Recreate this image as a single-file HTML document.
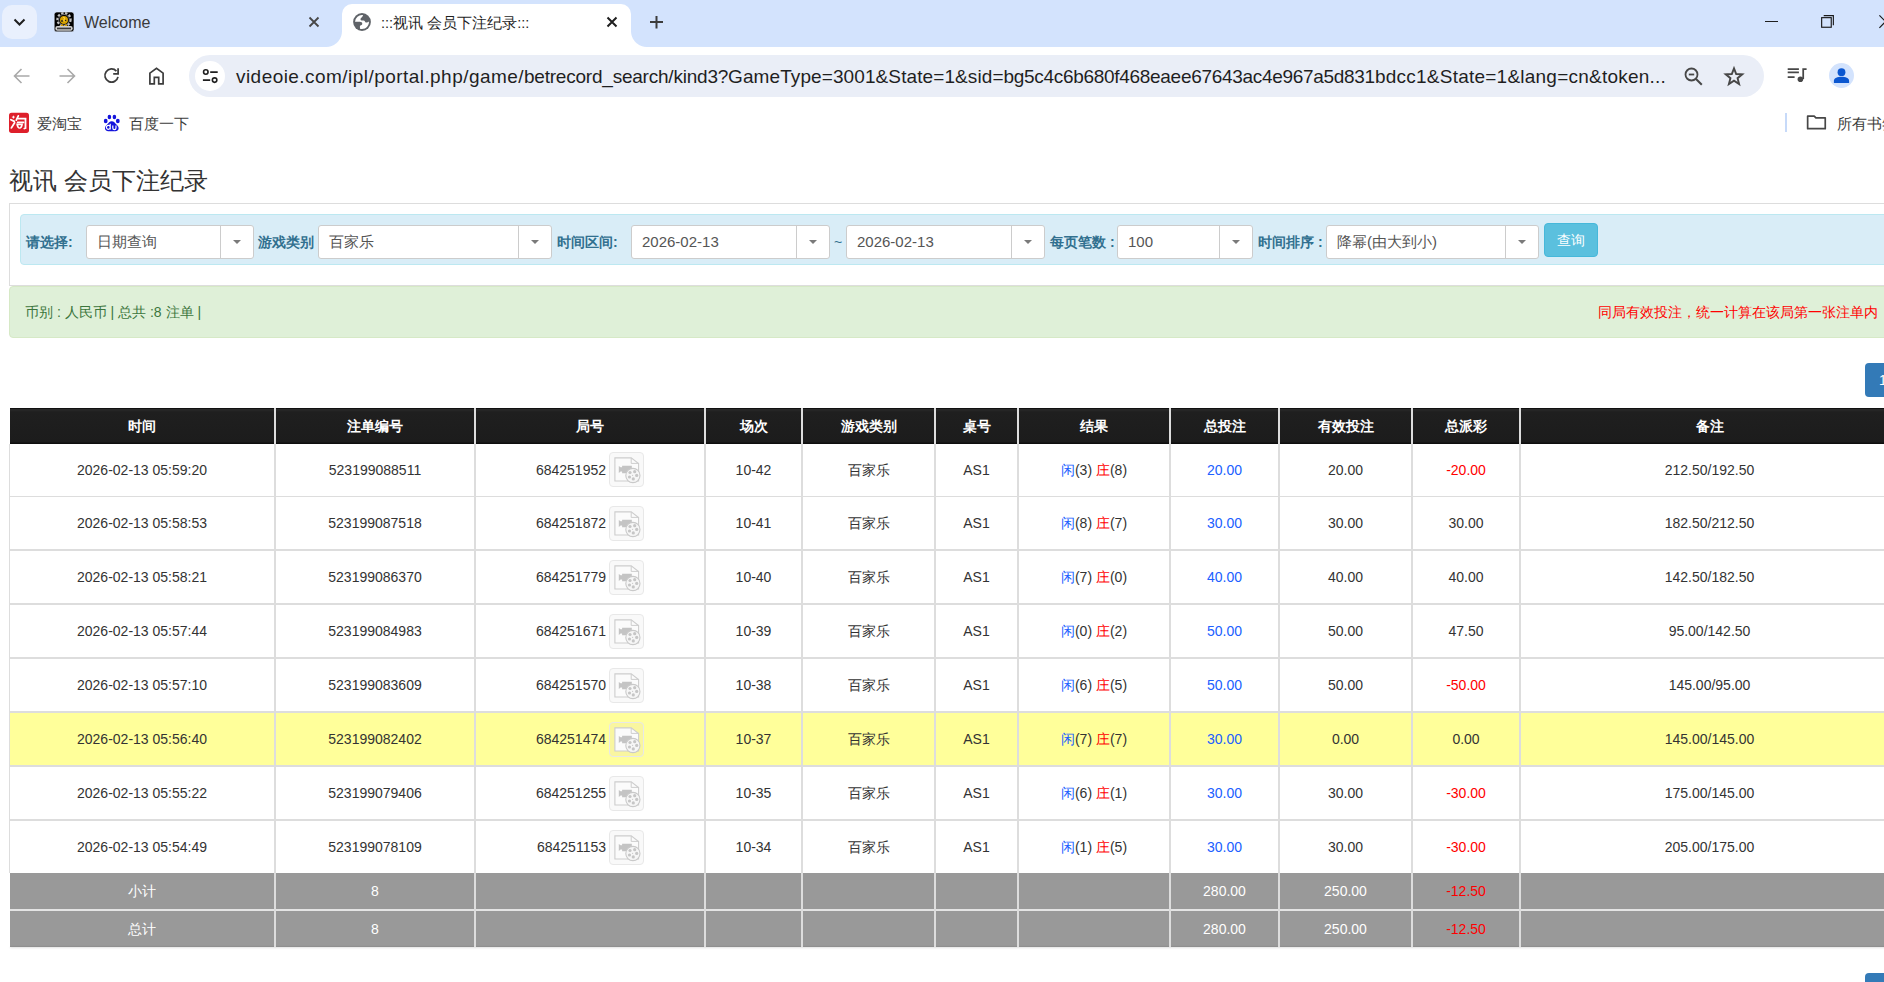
<!DOCTYPE html>
<html><head><meta charset="utf-8">
<style>
html,body{margin:0;padding:0;}
body{width:1884px;height:982px;overflow:hidden;position:relative;background:#fff;font-family:"Liberation Sans",sans-serif;color:#333;}
.a{position:absolute;}
.c{position:absolute;text-align:center;font-size:14px;color:#333;white-space:nowrap;padding-top:0px;box-sizing:border-box;}
.c.th{color:#fff;font-weight:bold;padding-top:0;}
.c.wt{color:#fff;padding-top:0;}
.blue{color:#2060ff;}
.red{color:#ff0000;}
.num{vertical-align:middle;}
.vbtn{display:inline-block;vertical-align:middle;width:33px;height:33px;border:1px solid #e8e8e8;border-radius:4px;margin-left:4px;position:relative;box-sizing:content-box;line-height:0;}
.vbtn svg{position:absolute;left:-1px;top:-1px;}
/* chrome */
#tabs{position:absolute;left:0;top:0;width:1884px;height:47px;background:#d3e3fd;}
.ui{font-family:"Liberation Sans",sans-serif;color:#1f1f1f;white-space:nowrap;}
.lbl{position:absolute;font-size:14px;font-weight:bold;color:#31708f;white-space:nowrap;line-height:33px;top:226px;}
.sel{position:absolute;top:225px;height:34px;box-sizing:border-box;border:1px solid #cccccc;border-radius:3px;background:#fff;}
.sel .t{position:absolute;left:10px;top:0;line-height:32px;font-size:15px;color:#555;white-space:nowrap;}
.sel .d{position:absolute;top:0;width:1px;height:32px;background:#cccccc;}
.sel .k{position:absolute;top:14px;width:0;height:0;border-left:4px solid transparent;border-right:4px solid transparent;border-top:4.5px solid #7a7a7a;}
</style></head><body>
<div id="tabs"></div>
<!-- tab search -->
<div class="a" style="left:2px;top:5px;width:35px;height:34px;border-radius:10px;background:#e9f0fd"></div>
<svg class="a" style="left:0;top:0" width="40" height="47"><path d="M14.5 19.5l5 5 5-5" fill="none" stroke="#1f1f1f" stroke-width="2"/></svg>
<!-- welcome favicon -->
<svg class="a" style="left:52px;top:10px" width="24" height="24" viewBox="0 0 24 24"><rect x="2.2" y="2" width="19.8" height="19.8" rx="2.6" fill="#000" stroke="#e4eeff" stroke-width="0.6"/><circle cx="12" cy="9.6" r="6.6" fill="none" stroke="#c2c2c2" stroke-width="2.2" stroke-dasharray="2.4 1.6"/><circle cx="12" cy="9.8" r="5.4" fill="none" stroke="#8a8a8a" stroke-width="0.8"/><circle cx="12" cy="10" r="4" fill="#d4a000"/><path d="M11 7.2c1.6.2 2.2 1.3 1.2 2.2-.8.7-.3 1.6.6 1.8" fill="none" stroke="#ffd23a" stroke-width="1.1"/><circle cx="10" cy="11" r="0.9" fill="#222"/><circle cx="13.6" cy="10.4" r="0.7" fill="#222"/><circle cx="10" cy="15.8" r="1.3" fill="#e0a400"/><circle cx="14" cy="15.8" r="1.3" fill="#e0a400"/><rect x="3.3" y="16" width="17.4" height="4.8" rx="2.2" fill="#d0d0d0"/><rect x="5" y="17.6" width="14" height="1.7" fill="#3a3a3a"/></svg>
<div class="a ui" style="left:84px;top:13px;font-size:16px;line-height:20px;color:#3a3a3a">Welcome</div>
<svg class="a" style="left:305px;top:13px" width="18" height="18"><path d="M4.5 4.5l9 9M13.5 4.5l-9 9" stroke="#474747" stroke-width="1.8"/></svg>
<!-- active tab -->
<div class="a" style="left:342px;top:4px;width:289px;height:43px;background:#fff;border-radius:10px 10px 0 0"></div>
<div class="a" style="left:326px;top:31px;width:16px;height:16px;background:radial-gradient(circle at 0 0, #d3e3fd 15.5px, #fff 16.5px)"></div>
<div class="a" style="left:631px;top:31px;width:16px;height:16px;background:radial-gradient(circle at 100% 0, #d3e3fd 15.5px, #fff 16.5px)"></div>
<svg class="a" style="left:350px;top:10px" width="24" height="24" viewBox="0 0 24 24"><circle cx="12" cy="12" r="8.9" fill="#5f6368"/><path fill="#fff" d="M13,5.07 C12.9,6.8 11.8,7.3 11,7.9 C10.2,8.6 10.3,10.2 11.5,10.4 L13.8,10.4 C14.6,10.5 14.8,11.2 15.2,11.9 C15.7,12.8 17.6,12.9 18.95,11.5 A7 7 0 0 1 10 18.7 L9.9,16.3 C10,15.4 10.8,15.3 11.6,15 C12.5,14.6 12.5,12.9 11.6,12.3 C10.4,11.5 6,11.6 5.0,11.8 A7 7 0 0 1 13 5.07Z"/></svg>
<div class="a ui" style="left:381px;top:13px;font-size:14.6px;line-height:20px;color:#1f1f1f">:::视讯 会员下注纪录:::</div>
<svg class="a" style="left:603px;top:13px" width="18" height="18"><path d="M4.5 4.5l9 9M13.5 4.5l-9 9" stroke="#1f1f1f" stroke-width="2"/></svg>
<svg class="a" style="left:647px;top:13px" width="20" height="18"><path d="M3 9h13M9.5 3v12.5" stroke="#3c3c3c" stroke-width="2"/></svg>
<!-- window controls -->
<div class="a" style="left:1765px;top:21px;width:13px;height:1px;background:#1f1f1f"></div>
<svg class="a" style="left:1818px;top:12px" width="20" height="20"><rect x="3.65" y="5.65" width="9.6" height="9.6" fill="none" stroke="#1a1a1a" stroke-width="1.15"/><path d="M5.7 3.55H15.35V13.2" fill="none" stroke="#1a1a1a" stroke-width="1.15"/></svg>
<svg class="a" style="left:1872px;top:12px" width="20" height="20"><path d="M7.4 3.4l12.4 12.4M19.8 3.4L7.4 15.8" stroke="#1a1a1a" stroke-width="1.2"/></svg>

<!-- toolbar -->
<svg class="a" style="left:10px;top:64px" width="24" height="24" viewBox="0 0 24 24"><path d="M19.5 12H5M11.5 5L4.5 12l7 7" fill="none" stroke="#a9a9a9" stroke-width="1.6"/></svg>
<svg class="a" style="left:55px;top:64px" width="24" height="24" viewBox="0 0 24 24"><path d="M4.5 12H19M12.5 5l7 7-7 7" fill="none" stroke="#a9a9a9" stroke-width="1.6"/></svg>
<svg class="a" style="left:100px;top:64px" width="24" height="24" viewBox="0 0 24 24"><path d="M16.4 7.1A6.6 6.6 0 1 0 18.0 12.8" fill="none" stroke="#3c3c3c" stroke-width="1.75"/><path d="M13.2 9.9H18.1V4.2" fill="none" stroke="#3c3c3c" stroke-width="1.75"/></svg>
<svg class="a" style="left:145px;top:64px" width="24" height="24" viewBox="0 0 24 24"><path d="M4.9 19.9V9.1L11.5 4.3 18.1 9.1V19.9H13.7V13.3H9.3V19.9Z" fill="none" stroke="#3c3c3c" stroke-width="1.7"/></svg>
<div class="a" style="left:189px;top:55px;width:1575px;height:42px;border-radius:21px;background:#eaeef7"></div>
<div class="a" style="left:195px;top:61px;width:30px;height:30px;border-radius:50%;background:#fff"></div>
<svg class="a" style="left:198px;top:64px" width="24" height="24" viewBox="0 0 24 24"><circle cx="7.8" cy="8" r="2.25" fill="none" stroke="#1f1f1f" stroke-width="1.6"/><path d="M12.2 8H19.7M4.9 16.1H12.2" stroke="#1f1f1f" stroke-width="1.75"/><circle cx="16.6" cy="16.1" r="2.25" fill="none" stroke="#1f1f1f" stroke-width="1.6"/></svg>
<div class="a ui" style="left:236px;top:65px;font-size:19px;line-height:24px;color:#1f1f1f;letter-spacing:0.45px">videoie.com/ipl/portal.php/game/</div><div class="a ui" style="left:524px;top:65px;font-size:19px;line-height:24px;color:#1f1f1f;letter-spacing:-0.22px">betrecord_search/kind3?</div><div class="a ui" style="left:728px;top:65px;font-size:19px;line-height:24px;color:#1f1f1f;letter-spacing:0.1px">GameType=3001&amp;State=1&amp;sid=</div><div class="a ui" style="left:1003.5px;top:65px;font-size:19px;line-height:24px;color:#1f1f1f;letter-spacing:-0.3px">bg5c4c6b680f468eaee67643ac4e967a5d831</div><div class="a ui" style="left:1375px;top:65px;font-size:19px;line-height:24px;color:#1f1f1f;letter-spacing:0.23px">bdcc1&amp;State=1&amp;lang=cn&amp;token...</div>
<svg class="a" style="left:1682px;top:65px" width="24" height="24" viewBox="0 0 24 24"><circle cx="9.5" cy="9.5" r="6" fill="none" stroke="#474747" stroke-width="1.8"/><path d="M6.8 9.5h5.4" stroke="#474747" stroke-width="1.8"/><path d="M13.8 13.8l6 6" stroke="#474747" stroke-width="2"/></svg>
<svg class="a" style="left:1722px;top:64px" width="24" height="24" viewBox="0 0 24 24"><path d="M12.00 4.30 L14.20 9.97 L20.27 10.31 L15.56 14.16 L17.11 20.04 L12.00 16.74 L6.89 20.04 L8.44 14.16 L3.73 10.31 L9.80 9.97Z" fill="none" stroke="#474747" stroke-width="1.9" stroke-linejoin="miter" stroke-miterlimit="3"/></svg>
<svg class="a" style="left:1785px;top:63px" width="24" height="24" viewBox="0 0 24 24"><path d="M2.7 6.1H13.9M2.7 9.4H13.9M2.7 14H9.6" stroke="#474747" stroke-width="1.75"/><path d="M18.2 16V6.1H21.6" fill="none" stroke="#474747" stroke-width="1.75"/><circle cx="15.4" cy="16.2" r="2.8" fill="#474747"/></svg>
<div class="a" style="left:1829px;top:63px;width:25px;height:25px;border-radius:50%;background:#d3e3fd"></div>
<svg class="a" style="left:1829px;top:63px" width="25" height="25" viewBox="0 0 25 25"><circle cx="12.5" cy="9.2" r="3.9" fill="#0b57d0"/><path d="M4.9 20V17.9C4.9 15.1 8.6 13.8 12.5 13.8S20.1 15.1 20.1 17.9V20Z" fill="#0b57d0"/></svg>

<!-- bookmarks bar -->
<svg class="a" style="left:6px;top:110px" width="26" height="26" viewBox="0 0 26 26"><rect x="3" y="2.8" width="20" height="20.1" rx="2.6" fill="#de1f2b"/><g fill="none" stroke="#fff" stroke-width="1.8" stroke-linecap="round"><path d="M4.9 9.7L8.3 11.4"/><path d="M5.4 17.9L8.6 12.7"/><path d="M12.3 5.9L10.3 10.1"/><path d="M12.3 8.6H19.5V18.1L18.3 18.5"/><path d="M11.7 12.4H17.5"/></g><path d="M7.4 5.2L7.95 6.55 9.3 7.1 7.95 7.65 7.4 9 6.85 7.65 5.5 7.1 6.85 6.55Z" fill="#fff"/><path d="M10.2 13.6H17C16.9 17.2 15.2 18.8 13.6 18.8 12 18.8 10.3 17.2 10.2 13.6Z" fill="#fff"/><path d="M13.6 17.4C12.3 16.4 12.1 15.3 12.9 15 13.3 14.85 13.6 15.1 13.6 15.4 13.6 15.1 13.9 14.85 14.3 15 15.1 15.3 14.9 16.4 13.6 17.4Z" fill="#de1f2b"/></svg>
<div class="a ui" style="left:37px;top:114px;font-size:14.5px;line-height:20px;color:#3c3c3c">爱淘宝</div>
<svg class="a" style="left:100px;top:110px" width="24" height="26" viewBox="0 0 24 26"><g fill="#1414dc"><ellipse cx="5.7" cy="11" rx="1.9" ry="2.2"/><ellipse cx="9.4" cy="7" rx="1.8" ry="2.3"/><ellipse cx="14.4" cy="7" rx="1.8" ry="2.3"/><ellipse cx="17.8" cy="11" rx="1.9" ry="2.2"/><path d="M11.7 11.2c-2 0-3.2 1.8-4.6 3.3-1.3 1.4-2.4 2.5-2.1 4.3.3 1.6 1.6 2.4 3.2 2.4h7.2c1.6 0 3-.8 3.2-2.4.3-1.8-.8-2.9-2.1-4.3-1.4-1.5-2.6-3.3-4.8-3.3Z"/></g><path d="M10.2 13.8v5.6M10.2 17.3a1.9 2 0 1 0 0 .1M12.8 15.6v2.4a1.6 1.6 0 0 0 3.2 0v-2.4" fill="none" stroke="#fff" stroke-width="1.2"/></svg>
<div class="a ui" style="left:129px;top:114px;font-size:14.5px;line-height:20px;color:#3c3c3c">百度一下</div>
<div class="a" style="left:1785px;top:113px;width:2px;height:19px;background:#c7daf9"></div>
<svg class="a" style="left:1804px;top:111px" width="24" height="24" viewBox="0 0 24 24"><path d="M3.65 5.05H10.2L11.9 6.8H21.25V17.65H3.65Z" fill="none" stroke="#474747" stroke-width="1.7" stroke-linejoin="round"/></svg>
<div class="a ui" style="left:1837px;top:114px;font-size:14.5px;line-height:20px;color:#3c3c3c">所有书签</div>

<!-- page -->
<div class="a" style="left:9px;top:165px;font-size:24px;line-height:32px;color:#333;white-space:nowrap">视讯 会员下注纪录</div>
<div class="a" style="left:9px;top:203px;width:2000px;height:83px;border:1px solid #dddddd;box-sizing:border-box"></div>
<div class="a" style="left:20px;top:214px;width:2000px;height:51px;border:1px solid #bce8f1;border-radius:4px;background:#d9edf7;box-sizing:border-box"></div>
<div class="lbl" style="left:26px">请选择:</div>
<div class="sel" style="left:86px;width:168px"><span class="t">日期查询</span><span class="d" style="left:133px"></span><span class="k" style="left:146.0px"></span></div>
<div class="lbl" style="left:258px">游戏类别</div>
<div class="sel" style="left:318px;width:234px"><span class="t">百家乐</span><span class="d" style="left:199px"></span><span class="k" style="left:212.0px"></span></div>
<div class="lbl" style="left:557px">时间区间:</div>
<div class="sel" style="left:631px;width:199px"><span class="t">2026-02-13</span><span class="d" style="left:164px"></span><span class="k" style="left:177.0px"></span></div>
<div class="lbl" style="left:834px;font-weight:normal">~</div>
<div class="sel" style="left:846px;width:199px"><span class="t">2026-02-13</span><span class="d" style="left:164px"></span><span class="k" style="left:177.0px"></span></div>
<div class="lbl" style="left:1050px">每页笔数 :</div>
<div class="sel" style="left:1117px;width:136px"><span class="t">100</span><span class="d" style="left:101px"></span><span class="k" style="left:114.0px"></span></div>
<div class="lbl" style="left:1258px">时间排序 :</div>
<div class="sel" style="left:1326px;width:213px"><span class="t">降幂(由大到小)</span><span class="d" style="left:178px"></span><span class="k" style="left:191.0px"></span></div>
<div class="a" style="left:1544px;top:223px;width:54px;height:34px;box-sizing:border-box;border:1px solid #46b8da;border-radius:4px;background:#5bc0de;color:#fff;font-size:14px;line-height:32px;text-align:center">查询</div>

<div class="a" style="left:9px;top:286px;width:2000px;height:52px;border:1px solid #d6e9c6;border-radius:4px;background:#dff0d8;box-sizing:border-box"></div>
<div class="a" style="left:25px;top:302px;font-size:14px;line-height:20px;color:#3c763d;white-space:nowrap">币别 : 人民币 | 总共 :8 注单 |</div>
<div class="a" style="left:1598px;top:302px;font-size:14px;line-height:20px;color:#ff0000;white-space:nowrap">同局有效投注，统一计算在该局第一张注单内</div>

<div class="a" style="left:1865px;top:363px;width:60px;height:34px;border-radius:4px;background:#337ab7;color:#fff;font-size:14px;line-height:34px;text-indent:14px">1</div>

<div style="position:absolute;left:10px;top:408px;width:1900px;height:36px;background:linear-gradient(#111 0px,#111 1px,#2b2b2b 1px,#1f1f1f 4px,#1c1c1c 34px,#0e0e0e 35px,#0e0e0e 36px)"></div>
<div class="c th" style="left:10px;top:408px;width:264px;height:36px;line-height:36px">时间</div>
<div class="c th" style="left:276px;top:408px;width:198px;height:36px;line-height:36px">注单编号</div>
<div class="c th" style="left:476px;top:408px;width:228px;height:36px;line-height:36px">局号</div>
<div class="c th" style="left:706px;top:408px;width:95px;height:36px;line-height:36px">场次</div>
<div class="c th" style="left:803px;top:408px;width:131px;height:36px;line-height:36px">游戏类别</div>
<div class="c th" style="left:936px;top:408px;width:81px;height:36px;line-height:36px">桌号</div>
<div class="c th" style="left:1019px;top:408px;width:150px;height:36px;line-height:36px">结果</div>
<div class="c th" style="left:1171px;top:408px;width:107px;height:36px;line-height:36px">总投注</div>
<div class="c th" style="left:1280px;top:408px;width:131px;height:36px;line-height:36px">有效投注</div>
<div class="c th" style="left:1413px;top:408px;width:106px;height:36px;line-height:36px">总派彩</div>
<div class="c th" style="left:1521px;top:408px;width:377px;height:36px;line-height:36px">备注</div>
<div style="position:absolute;left:10px;top:444px;width:1900px;height:52px;background:#fff"></div>
<div class="c " style="left:10px;top:444px;width:264px;height:52px;line-height:52px">2026-02-13 05:59:20</div>
<div class="c " style="left:276px;top:444px;width:198px;height:52px;line-height:52px">523199088511</div>
<div class="c" style="left:476px;top:444px;width:130px;height:52px;line-height:52px;text-align:right">684251952</div>
<div class="vbtn" style="position:absolute;left:609px;top:452px;background:#f9f9f9;margin:0"><svg width="35" height="35" viewBox="0 0 35 35"><path d="M5.9 5.9H22.2L29.6 11.6V29H5.9Z" fill="#fbfbfb" stroke="#cdcdcd" stroke-width="1.1"/><path d="M22.2 5.9V11.4H29.6" fill="none" stroke="#cdcdcd" stroke-width="1"/><path d="M13.1 13.7H22.8V21.2H13.1V19.6H11.6L9.8 20.9V13.9L11.6 15.3H13.1Z" fill="#c4c4c4"/><circle cx="23.9" cy="23.5" r="7.1" fill="#f6f6f6" stroke="#c9c9c9" stroke-width="1.1"/><g fill="#c6c6c6"><circle cx="21" cy="20.5" r="1.6"/><circle cx="25.7" cy="19.7" r="1.6"/><circle cx="27.7" cy="23.4" r="1.6"/><circle cx="24.3" cy="26.9" r="1.6"/><circle cx="20.5" cy="25" r="1.6"/><circle cx="23.6" cy="23.3" r="0.6"/></g></svg></div>
<div class="c " style="left:706px;top:444px;width:95px;height:52px;line-height:52px">10-42</div>
<div class="c " style="left:803px;top:444px;width:131px;height:52px;line-height:52px">百家乐</div>
<div class="c " style="left:936px;top:444px;width:81px;height:52px;line-height:52px">AS1</div>
<div class="c " style="left:1019px;top:444px;width:150px;height:52px;line-height:52px"><span class="blue">闲</span>(3) <span class="red">庄</span>(8)</div>
<div class="c " style="left:1171px;top:444px;width:107px;height:52px;line-height:52px"><span class="blue">20.00</span></div>
<div class="c " style="left:1280px;top:444px;width:131px;height:52px;line-height:52px">20.00</div>
<div class="c " style="left:1413px;top:444px;width:106px;height:52px;line-height:52px"><span class="red">-20.00</span></div>
<div class="c " style="left:1521px;top:444px;width:377px;height:52px;line-height:52px">212.50/192.50</div>
<div style="position:absolute;left:10px;top:497px;width:1900px;height:52px;background:#fff"></div>
<div class="c " style="left:10px;top:497px;width:264px;height:52px;line-height:52px">2026-02-13 05:58:53</div>
<div class="c " style="left:276px;top:497px;width:198px;height:52px;line-height:52px">523199087518</div>
<div class="c" style="left:476px;top:497px;width:130px;height:52px;line-height:52px;text-align:right">684251872</div>
<div class="vbtn" style="position:absolute;left:609px;top:506px;background:#f9f9f9;margin:0"><svg width="35" height="35" viewBox="0 0 35 35"><path d="M5.9 5.9H22.2L29.6 11.6V29H5.9Z" fill="#fbfbfb" stroke="#cdcdcd" stroke-width="1.1"/><path d="M22.2 5.9V11.4H29.6" fill="none" stroke="#cdcdcd" stroke-width="1"/><path d="M13.1 13.7H22.8V21.2H13.1V19.6H11.6L9.8 20.9V13.9L11.6 15.3H13.1Z" fill="#c4c4c4"/><circle cx="23.9" cy="23.5" r="7.1" fill="#f6f6f6" stroke="#c9c9c9" stroke-width="1.1"/><g fill="#c6c6c6"><circle cx="21" cy="20.5" r="1.6"/><circle cx="25.7" cy="19.7" r="1.6"/><circle cx="27.7" cy="23.4" r="1.6"/><circle cx="24.3" cy="26.9" r="1.6"/><circle cx="20.5" cy="25" r="1.6"/><circle cx="23.6" cy="23.3" r="0.6"/></g></svg></div>
<div class="c " style="left:706px;top:497px;width:95px;height:52px;line-height:52px">10-41</div>
<div class="c " style="left:803px;top:497px;width:131px;height:52px;line-height:52px">百家乐</div>
<div class="c " style="left:936px;top:497px;width:81px;height:52px;line-height:52px">AS1</div>
<div class="c " style="left:1019px;top:497px;width:150px;height:52px;line-height:52px"><span class="blue">闲</span>(8) <span class="red">庄</span>(7)</div>
<div class="c " style="left:1171px;top:497px;width:107px;height:52px;line-height:52px"><span class="blue">30.00</span></div>
<div class="c " style="left:1280px;top:497px;width:131px;height:52px;line-height:52px">30.00</div>
<div class="c " style="left:1413px;top:497px;width:106px;height:52px;line-height:52px">30.00</div>
<div class="c " style="left:1521px;top:497px;width:377px;height:52px;line-height:52px">182.50/212.50</div>
<div style="position:absolute;left:10px;top:551px;width:1900px;height:52px;background:#fff"></div>
<div class="c " style="left:10px;top:551px;width:264px;height:52px;line-height:52px">2026-02-13 05:58:21</div>
<div class="c " style="left:276px;top:551px;width:198px;height:52px;line-height:52px">523199086370</div>
<div class="c" style="left:476px;top:551px;width:130px;height:52px;line-height:52px;text-align:right">684251779</div>
<div class="vbtn" style="position:absolute;left:609px;top:560px;background:#f9f9f9;margin:0"><svg width="35" height="35" viewBox="0 0 35 35"><path d="M5.9 5.9H22.2L29.6 11.6V29H5.9Z" fill="#fbfbfb" stroke="#cdcdcd" stroke-width="1.1"/><path d="M22.2 5.9V11.4H29.6" fill="none" stroke="#cdcdcd" stroke-width="1"/><path d="M13.1 13.7H22.8V21.2H13.1V19.6H11.6L9.8 20.9V13.9L11.6 15.3H13.1Z" fill="#c4c4c4"/><circle cx="23.9" cy="23.5" r="7.1" fill="#f6f6f6" stroke="#c9c9c9" stroke-width="1.1"/><g fill="#c6c6c6"><circle cx="21" cy="20.5" r="1.6"/><circle cx="25.7" cy="19.7" r="1.6"/><circle cx="27.7" cy="23.4" r="1.6"/><circle cx="24.3" cy="26.9" r="1.6"/><circle cx="20.5" cy="25" r="1.6"/><circle cx="23.6" cy="23.3" r="0.6"/></g></svg></div>
<div class="c " style="left:706px;top:551px;width:95px;height:52px;line-height:52px">10-40</div>
<div class="c " style="left:803px;top:551px;width:131px;height:52px;line-height:52px">百家乐</div>
<div class="c " style="left:936px;top:551px;width:81px;height:52px;line-height:52px">AS1</div>
<div class="c " style="left:1019px;top:551px;width:150px;height:52px;line-height:52px"><span class="blue">闲</span>(7) <span class="red">庄</span>(0)</div>
<div class="c " style="left:1171px;top:551px;width:107px;height:52px;line-height:52px"><span class="blue">40.00</span></div>
<div class="c " style="left:1280px;top:551px;width:131px;height:52px;line-height:52px">40.00</div>
<div class="c " style="left:1413px;top:551px;width:106px;height:52px;line-height:52px">40.00</div>
<div class="c " style="left:1521px;top:551px;width:377px;height:52px;line-height:52px">142.50/182.50</div>
<div style="position:absolute;left:10px;top:605px;width:1900px;height:52px;background:#fff"></div>
<div class="c " style="left:10px;top:605px;width:264px;height:52px;line-height:52px">2026-02-13 05:57:44</div>
<div class="c " style="left:276px;top:605px;width:198px;height:52px;line-height:52px">523199084983</div>
<div class="c" style="left:476px;top:605px;width:130px;height:52px;line-height:52px;text-align:right">684251671</div>
<div class="vbtn" style="position:absolute;left:609px;top:614px;background:#f9f9f9;margin:0"><svg width="35" height="35" viewBox="0 0 35 35"><path d="M5.9 5.9H22.2L29.6 11.6V29H5.9Z" fill="#fbfbfb" stroke="#cdcdcd" stroke-width="1.1"/><path d="M22.2 5.9V11.4H29.6" fill="none" stroke="#cdcdcd" stroke-width="1"/><path d="M13.1 13.7H22.8V21.2H13.1V19.6H11.6L9.8 20.9V13.9L11.6 15.3H13.1Z" fill="#c4c4c4"/><circle cx="23.9" cy="23.5" r="7.1" fill="#f6f6f6" stroke="#c9c9c9" stroke-width="1.1"/><g fill="#c6c6c6"><circle cx="21" cy="20.5" r="1.6"/><circle cx="25.7" cy="19.7" r="1.6"/><circle cx="27.7" cy="23.4" r="1.6"/><circle cx="24.3" cy="26.9" r="1.6"/><circle cx="20.5" cy="25" r="1.6"/><circle cx="23.6" cy="23.3" r="0.6"/></g></svg></div>
<div class="c " style="left:706px;top:605px;width:95px;height:52px;line-height:52px">10-39</div>
<div class="c " style="left:803px;top:605px;width:131px;height:52px;line-height:52px">百家乐</div>
<div class="c " style="left:936px;top:605px;width:81px;height:52px;line-height:52px">AS1</div>
<div class="c " style="left:1019px;top:605px;width:150px;height:52px;line-height:52px"><span class="blue">闲</span>(0) <span class="red">庄</span>(2)</div>
<div class="c " style="left:1171px;top:605px;width:107px;height:52px;line-height:52px"><span class="blue">50.00</span></div>
<div class="c " style="left:1280px;top:605px;width:131px;height:52px;line-height:52px">50.00</div>
<div class="c " style="left:1413px;top:605px;width:106px;height:52px;line-height:52px">47.50</div>
<div class="c " style="left:1521px;top:605px;width:377px;height:52px;line-height:52px">95.00/142.50</div>
<div style="position:absolute;left:10px;top:659px;width:1900px;height:52px;background:#fff"></div>
<div class="c " style="left:10px;top:659px;width:264px;height:52px;line-height:52px">2026-02-13 05:57:10</div>
<div class="c " style="left:276px;top:659px;width:198px;height:52px;line-height:52px">523199083609</div>
<div class="c" style="left:476px;top:659px;width:130px;height:52px;line-height:52px;text-align:right">684251570</div>
<div class="vbtn" style="position:absolute;left:609px;top:668px;background:#f9f9f9;margin:0"><svg width="35" height="35" viewBox="0 0 35 35"><path d="M5.9 5.9H22.2L29.6 11.6V29H5.9Z" fill="#fbfbfb" stroke="#cdcdcd" stroke-width="1.1"/><path d="M22.2 5.9V11.4H29.6" fill="none" stroke="#cdcdcd" stroke-width="1"/><path d="M13.1 13.7H22.8V21.2H13.1V19.6H11.6L9.8 20.9V13.9L11.6 15.3H13.1Z" fill="#c4c4c4"/><circle cx="23.9" cy="23.5" r="7.1" fill="#f6f6f6" stroke="#c9c9c9" stroke-width="1.1"/><g fill="#c6c6c6"><circle cx="21" cy="20.5" r="1.6"/><circle cx="25.7" cy="19.7" r="1.6"/><circle cx="27.7" cy="23.4" r="1.6"/><circle cx="24.3" cy="26.9" r="1.6"/><circle cx="20.5" cy="25" r="1.6"/><circle cx="23.6" cy="23.3" r="0.6"/></g></svg></div>
<div class="c " style="left:706px;top:659px;width:95px;height:52px;line-height:52px">10-38</div>
<div class="c " style="left:803px;top:659px;width:131px;height:52px;line-height:52px">百家乐</div>
<div class="c " style="left:936px;top:659px;width:81px;height:52px;line-height:52px">AS1</div>
<div class="c " style="left:1019px;top:659px;width:150px;height:52px;line-height:52px"><span class="blue">闲</span>(6) <span class="red">庄</span>(5)</div>
<div class="c " style="left:1171px;top:659px;width:107px;height:52px;line-height:52px"><span class="blue">50.00</span></div>
<div class="c " style="left:1280px;top:659px;width:131px;height:52px;line-height:52px">50.00</div>
<div class="c " style="left:1413px;top:659px;width:106px;height:52px;line-height:52px"><span class="red">-50.00</span></div>
<div class="c " style="left:1521px;top:659px;width:377px;height:52px;line-height:52px">145.00/95.00</div>
<div style="position:absolute;left:10px;top:713px;width:1900px;height:52px;background:#ffff9a"></div>
<div class="c " style="left:10px;top:713px;width:264px;height:52px;line-height:52px">2026-02-13 05:56:40</div>
<div class="c " style="left:276px;top:713px;width:198px;height:52px;line-height:52px">523199082402</div>
<div class="c" style="left:476px;top:713px;width:130px;height:52px;line-height:52px;text-align:right">684251474</div>
<div class="vbtn" style="position:absolute;left:609px;top:722px;background:#f9f6a0;margin:0"><svg width="35" height="35" viewBox="0 0 35 35"><path d="M5.9 5.9H22.2L29.6 11.6V29H5.9Z" fill="#fbfbfb" stroke="#cdcdcd" stroke-width="1.1"/><path d="M22.2 5.9V11.4H29.6" fill="none" stroke="#cdcdcd" stroke-width="1"/><path d="M13.1 13.7H22.8V21.2H13.1V19.6H11.6L9.8 20.9V13.9L11.6 15.3H13.1Z" fill="#c4c4c4"/><circle cx="23.9" cy="23.5" r="7.1" fill="#f6f6f6" stroke="#c9c9c9" stroke-width="1.1"/><g fill="#c6c6c6"><circle cx="21" cy="20.5" r="1.6"/><circle cx="25.7" cy="19.7" r="1.6"/><circle cx="27.7" cy="23.4" r="1.6"/><circle cx="24.3" cy="26.9" r="1.6"/><circle cx="20.5" cy="25" r="1.6"/><circle cx="23.6" cy="23.3" r="0.6"/></g></svg></div>
<div class="c " style="left:706px;top:713px;width:95px;height:52px;line-height:52px">10-37</div>
<div class="c " style="left:803px;top:713px;width:131px;height:52px;line-height:52px">百家乐</div>
<div class="c " style="left:936px;top:713px;width:81px;height:52px;line-height:52px">AS1</div>
<div class="c " style="left:1019px;top:713px;width:150px;height:52px;line-height:52px"><span class="blue">闲</span>(7) <span class="red">庄</span>(7)</div>
<div class="c " style="left:1171px;top:713px;width:107px;height:52px;line-height:52px"><span class="blue">30.00</span></div>
<div class="c " style="left:1280px;top:713px;width:131px;height:52px;line-height:52px">0.00</div>
<div class="c " style="left:1413px;top:713px;width:106px;height:52px;line-height:52px">0.00</div>
<div class="c " style="left:1521px;top:713px;width:377px;height:52px;line-height:52px">145.00/145.00</div>
<div style="position:absolute;left:10px;top:767px;width:1900px;height:52px;background:#fff"></div>
<div class="c " style="left:10px;top:767px;width:264px;height:52px;line-height:52px">2026-02-13 05:55:22</div>
<div class="c " style="left:276px;top:767px;width:198px;height:52px;line-height:52px">523199079406</div>
<div class="c" style="left:476px;top:767px;width:130px;height:52px;line-height:52px;text-align:right">684251255</div>
<div class="vbtn" style="position:absolute;left:609px;top:776px;background:#f9f9f9;margin:0"><svg width="35" height="35" viewBox="0 0 35 35"><path d="M5.9 5.9H22.2L29.6 11.6V29H5.9Z" fill="#fbfbfb" stroke="#cdcdcd" stroke-width="1.1"/><path d="M22.2 5.9V11.4H29.6" fill="none" stroke="#cdcdcd" stroke-width="1"/><path d="M13.1 13.7H22.8V21.2H13.1V19.6H11.6L9.8 20.9V13.9L11.6 15.3H13.1Z" fill="#c4c4c4"/><circle cx="23.9" cy="23.5" r="7.1" fill="#f6f6f6" stroke="#c9c9c9" stroke-width="1.1"/><g fill="#c6c6c6"><circle cx="21" cy="20.5" r="1.6"/><circle cx="25.7" cy="19.7" r="1.6"/><circle cx="27.7" cy="23.4" r="1.6"/><circle cx="24.3" cy="26.9" r="1.6"/><circle cx="20.5" cy="25" r="1.6"/><circle cx="23.6" cy="23.3" r="0.6"/></g></svg></div>
<div class="c " style="left:706px;top:767px;width:95px;height:52px;line-height:52px">10-35</div>
<div class="c " style="left:803px;top:767px;width:131px;height:52px;line-height:52px">百家乐</div>
<div class="c " style="left:936px;top:767px;width:81px;height:52px;line-height:52px">AS1</div>
<div class="c " style="left:1019px;top:767px;width:150px;height:52px;line-height:52px"><span class="blue">闲</span>(6) <span class="red">庄</span>(1)</div>
<div class="c " style="left:1171px;top:767px;width:107px;height:52px;line-height:52px"><span class="blue">30.00</span></div>
<div class="c " style="left:1280px;top:767px;width:131px;height:52px;line-height:52px">30.00</div>
<div class="c " style="left:1413px;top:767px;width:106px;height:52px;line-height:52px"><span class="red">-30.00</span></div>
<div class="c " style="left:1521px;top:767px;width:377px;height:52px;line-height:52px">175.00/145.00</div>
<div style="position:absolute;left:10px;top:821px;width:1900px;height:52px;background:#fff"></div>
<div class="c " style="left:10px;top:821px;width:264px;height:52px;line-height:52px">2026-02-13 05:54:49</div>
<div class="c " style="left:276px;top:821px;width:198px;height:52px;line-height:52px">523199078109</div>
<div class="c" style="left:476px;top:821px;width:130px;height:52px;line-height:52px;text-align:right">684251153</div>
<div class="vbtn" style="position:absolute;left:609px;top:830px;background:#f9f9f9;margin:0"><svg width="35" height="35" viewBox="0 0 35 35"><path d="M5.9 5.9H22.2L29.6 11.6V29H5.9Z" fill="#fbfbfb" stroke="#cdcdcd" stroke-width="1.1"/><path d="M22.2 5.9V11.4H29.6" fill="none" stroke="#cdcdcd" stroke-width="1"/><path d="M13.1 13.7H22.8V21.2H13.1V19.6H11.6L9.8 20.9V13.9L11.6 15.3H13.1Z" fill="#c4c4c4"/><circle cx="23.9" cy="23.5" r="7.1" fill="#f6f6f6" stroke="#c9c9c9" stroke-width="1.1"/><g fill="#c6c6c6"><circle cx="21" cy="20.5" r="1.6"/><circle cx="25.7" cy="19.7" r="1.6"/><circle cx="27.7" cy="23.4" r="1.6"/><circle cx="24.3" cy="26.9" r="1.6"/><circle cx="20.5" cy="25" r="1.6"/><circle cx="23.6" cy="23.3" r="0.6"/></g></svg></div>
<div class="c " style="left:706px;top:821px;width:95px;height:52px;line-height:52px">10-34</div>
<div class="c " style="left:803px;top:821px;width:131px;height:52px;line-height:52px">百家乐</div>
<div class="c " style="left:936px;top:821px;width:81px;height:52px;line-height:52px">AS1</div>
<div class="c " style="left:1019px;top:821px;width:150px;height:52px;line-height:52px"><span class="blue">闲</span>(1) <span class="red">庄</span>(5)</div>
<div class="c " style="left:1171px;top:821px;width:107px;height:52px;line-height:52px"><span class="blue">30.00</span></div>
<div class="c " style="left:1280px;top:821px;width:131px;height:52px;line-height:52px">30.00</div>
<div class="c " style="left:1413px;top:821px;width:106px;height:52px;line-height:52px"><span class="red">-30.00</span></div>
<div class="c " style="left:1521px;top:821px;width:377px;height:52px;line-height:52px">205.00/175.00</div>
<div style="position:absolute;left:9px;top:496px;width:1900px;height:1px;background:#dddddd"></div>
<div style="position:absolute;left:9px;top:549px;width:1900px;height:2px;background:#dddddd"></div>
<div style="position:absolute;left:9px;top:603px;width:1900px;height:2px;background:#dddddd"></div>
<div style="position:absolute;left:9px;top:657px;width:1900px;height:2px;background:#dddddd"></div>
<div style="position:absolute;left:9px;top:711px;width:1900px;height:2px;background:#dddddd"></div>
<div style="position:absolute;left:9px;top:765px;width:1900px;height:2px;background:#dddddd"></div>
<div style="position:absolute;left:9px;top:819px;width:1900px;height:2px;background:#dddddd"></div>
<div style="position:absolute;left:10px;top:873px;width:1900px;height:36px;background:#999999"></div>
<div class="c wt" style="left:10px;top:873px;width:264px;height:36px;line-height:36px">小计</div>
<div class="c wt" style="left:276px;top:873px;width:198px;height:36px;line-height:36px">8</div>
<div class="c wt" style="left:1171px;top:873px;width:107px;height:36px;line-height:36px">280.00</div>
<div class="c wt" style="left:1280px;top:873px;width:131px;height:36px;line-height:36px">250.00</div>
<div class="c wt" style="left:1413px;top:873px;width:106px;height:36px;line-height:36px"><span class="red">-12.50</span></div>
<div style="position:absolute;left:10px;top:911px;width:1900px;height:36px;background:#999999"></div>
<div class="c wt" style="left:10px;top:911px;width:264px;height:36px;line-height:36px">总计</div>
<div class="c wt" style="left:276px;top:911px;width:198px;height:36px;line-height:36px">8</div>
<div class="c wt" style="left:1171px;top:911px;width:107px;height:36px;line-height:36px">280.00</div>
<div class="c wt" style="left:1280px;top:911px;width:131px;height:36px;line-height:36px">250.00</div>
<div class="c wt" style="left:1413px;top:911px;width:106px;height:36px;line-height:36px"><span class="red">-12.50</span></div>
<div style="position:absolute;left:10px;top:909px;width:1900px;height:2px;background:#e4e4e4"></div>
<div style="position:absolute;left:10px;top:946px;width:1900px;height:1px;background:#8f8f8f;border-radius:0 0 0 4px;box-shadow:0 1px 2px rgba(0,0,0,0.18)"></div>
<div style="position:absolute;left:274px;top:408px;width:2px;height:539px;background:#dddddd"></div>
<div style="position:absolute;left:474px;top:408px;width:2px;height:539px;background:#dddddd"></div>
<div style="position:absolute;left:704px;top:408px;width:2px;height:539px;background:#dddddd"></div>
<div style="position:absolute;left:801px;top:408px;width:2px;height:539px;background:#dddddd"></div>
<div style="position:absolute;left:934px;top:408px;width:2px;height:539px;background:#dddddd"></div>
<div style="position:absolute;left:1017px;top:408px;width:2px;height:539px;background:#dddddd"></div>
<div style="position:absolute;left:1169px;top:408px;width:2px;height:539px;background:#dddddd"></div>
<div style="position:absolute;left:1278px;top:408px;width:2px;height:539px;background:#dddddd"></div>
<div style="position:absolute;left:1411px;top:408px;width:2px;height:539px;background:#dddddd"></div>
<div style="position:absolute;left:1519px;top:408px;width:2px;height:539px;background:#dddddd"></div>
<div style="position:absolute;left:9px;top:444px;width:1px;height:429px;background:#dddddd"></div>

<div class="a" style="left:1865px;top:973px;width:60px;height:34px;border-radius:4px;background:#337ab7"></div>
</body></html>
